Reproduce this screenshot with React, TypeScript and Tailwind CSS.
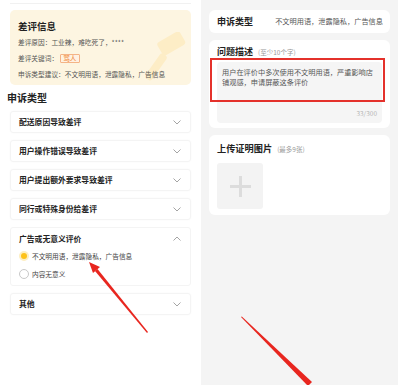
import React from "react";

const font = { fontFamily: '"Noto Sans CJK SC", "Noto Sans", sans-serif' };

function Chevron({ up = false }: { up?: boolean }) {
  return (
    <svg width="8" height="5" viewBox="0 0 8 5" className="shrink-0">
      <path
        d={up ? "M0.5 4.5 L4 1 L7.5 4.5" : "M0.5 0.5 L4 4 L7.5 0.5"}
        fill="none"
        stroke="#9a9a9a"
        strokeWidth="0.9"
      />
    </svg>
  );
}

function Item({ title }: { title: string }) {
  return (
    <div className="mx-[10px] h-[22px] rounded-[3px] border border-[#f4f4f4] shadow-[0_0_2px_rgba(0,0,0,0.03)] flex items-center justify-between pl-[8px] pr-[9px]">
      <span className="text-[7.8px] font-semibold text-[#222]">{title}</span>
      <Chevron />
    </div>
  );
}

export default function App() {
  return (
    <div className="relative w-[400px] h-[385px] flex bg-white overflow-hidden" style={font}>
      {/* Left panel */}
      <div className="w-[201px] h-full bg-white flex flex-col">
        <div className="mx-[10px] mt-[3px] h-px bg-[#f1f1f1]" />
        <div className="relative mx-[10px] mt-[6px] h-[75px] rounded-[5px] bg-[#fdf5e1] px-[8px] pt-[9px] overflow-hidden">
          <svg className="absolute left-[128px] top-[22px]" width="54" height="54" viewBox="0 0 54 54">
            <g opacity="0.35">
              <rect x="20" y="4" width="26" height="15" rx="3" transform="rotate(-30 33 11)" fill="#fbdf94" />
              <rect x="14" y="20" width="8" height="30" rx="3" transform="rotate(35 18 35)" fill="#fbdf94" />
            </g>
          </svg>
          <div className="relative text-[9.5px] font-bold text-[#222] leading-[14px]">差评信息</div>
          <div className="relative mt-[4px] text-[6.7px] text-[#555] leading-[10px]">差评原因：工业辣，难吃死了，****</div>
          <div className="relative mt-[6px] flex items-center text-[6.7px] text-[#555] leading-[10px]">
            <span>差评关键词：</span>
            <span className="ml-[2px] px-[2px] h-[9px] flex items-center border border-[#f4b487] rounded-[1px] text-[#f08838] bg-[#fff1e2]">骂人</span>
          </div>
          <div className="relative mt-[6px] text-[6.7px] text-[#555] leading-[10px]">申诉类型建议：不文明用语，泄露隐私，广告信息</div>
        </div>
        <div className="mt-[6px] ml-[7px] text-[10px] font-bold text-[#222] leading-[14px]">申诉类型</div>
        <div className="mt-[6px] flex flex-col gap-[7px]">
          <Item title="配送原因导致差评" />
          <Item title="用户操作错误导致差评" />
          <Item title="用户提出额外要求导致差评" />
          <Item title="同行或特殊身份给差评" />
          <div className="mx-[10px] h-[59px] rounded-[3px] border border-[#f4f4f4] flex flex-col pl-[8px] pr-[9px]">
            <div className="h-[21px] flex items-center justify-between">
              <span className="text-[7.8px] font-semibold text-[#222]">广告或无意义评价</span>
              <Chevron up />
            </div>
            <div className="mt-[2px] flex items-center gap-[3px]">
              <span className="w-[10px] h-[10px] rounded-full bg-[#fdeec0] flex items-center justify-center">
                <span className="w-[6px] h-[6px] rounded-full bg-[#fdc21a]" />
              </span>
              <span className="text-[6.7px] text-[#444]">不文明用语，泄露隐私，广告信息</span>
            </div>
            <div className="mt-[8px] flex items-center gap-[3px]">
              <span className="w-[10px] h-[10px] rounded-full border border-[#c8c8c8]" />
              <span className="text-[6.7px] text-[#444]">内容无意义</span>
            </div>
          </div>
          <Item title="其他" />
        </div>
      </div>

      {/* Right panel */}
      <div className="w-[197px] h-full bg-[#f4f4f4] flex flex-col px-[8px] pt-[10px] gap-[7px]">
        <div className="h-[23px] rounded-[6px] bg-white flex items-center justify-between pl-[8px] pr-[7px]">
          <span className="text-[9px] font-bold text-[#222]">申诉类型</span>
          <span className="text-[7.2px] text-[#555]">不文明用语，泄露隐私，广告信息</span>
        </div>
        <div className="relative h-[88px] rounded-[6px] bg-white px-[8px] pt-[5px]">
          <div className="flex items-baseline gap-[5px] leading-[14px]">
            <span className="text-[9px] font-bold text-[#222]">问题描述</span>
            <span className="text-[6.5px] text-[#999]">(至少10个字)</span>
          </div>
          <div className="mt-[3px] h-[61px] rounded-[4px] bg-[#f5f5f5] px-[5px] pt-[5px] flex flex-col">
            <div className="text-[7.2px] text-[#555] leading-[10px]">用户在评价中多次使用不文明用语，严重影响店铺观感，申请屏蔽这条评价</div>
            <div className="mt-auto mb-[4px] text-right text-[6.5px] text-[#b5b5b5]">33/300</div>
          </div>
          <div className="absolute left-[1px] top-[18px] w-[175px] h-[44px] border-2 border-[#e4312b]" />
        </div>
        <div className="h-[80px] rounded-[6px] bg-white px-[8px] pt-[6px]">
          <div className="flex items-baseline gap-[5px] leading-[14px]">
            <span className="text-[9.2px] font-bold text-[#222]">上传证明图片</span>
            <span className="text-[6.5px] text-[#999]">(最多9张)</span>
          </div>
          <div className="mt-[7px] w-[46px] h-[46px] rounded-[3px] bg-[#f3f3f3] flex items-center justify-center">
            <svg width="21" height="21" viewBox="0 0 21 21">
              <rect x="9" y="0" width="3" height="21" fill="#dcdcdc" />
              <rect x="0" y="9" width="21" height="3" fill="#dcdcdc" />
            </svg>
          </div>
        </div>
      </div>
      <div className="w-[2px] h-full bg-white" />

      {/* Red arrows overlay */}
      <svg className="absolute left-0 top-0 pointer-events-none" width="400" height="385" viewBox="0 0 400 385">
        <polygon points="147,333 95,271 97.5,269 148,332" fill="#e8261f" />
        <polygon points="89,262 100,267 93,273" fill="#e8261f" />
        <polygon points="241,317 241.8,316.5 312,382 308,386" fill="#e8261f" />
      </svg>
    </div>
  );
}
